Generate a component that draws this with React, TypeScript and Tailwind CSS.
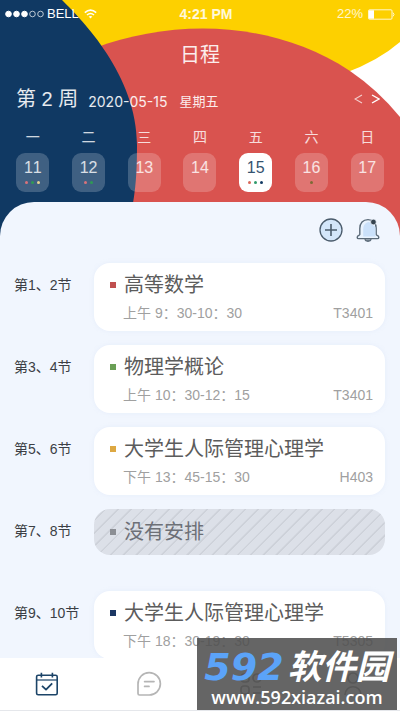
import React from 'react';
import clsx from 'clsx';

interface Day {
    label: string;
    date: number;
    dots: string[];
}

interface Lesson {
    period: string;
    title: string;
    marker: string;
    time?: string;
    room?: string;
}

const days: Day[] = [
    { label: '一', date: 11, dots: ['bg-[#d9727a]', 'bg-[#2f9a55]', 'bg-[#e6d290]'] },
    { label: '二', date: 12, dots: ['bg-[#d9727a]', 'bg-[#2f9a55]'] },
    { label: '三', date: 13, dots: [] },
    { label: '四', date: 14, dots: [] },
    { label: '五', date: 15, dots: ['bg-[#d9685a]', 'bg-[#2f9a6a]', 'bg-[#123a63]'] },
    { label: '六', date: 16, dots: ['bg-[#7d6a35]'] },
    { label: '日', date: 17, dots: [] },
];

const lessons: Lesson[] = [
    { period: '第1、2节', title: '高等数学', marker: 'bg-[#c0504f]', time: '上午 9：30-10：30', room: 'T3401' },
    { period: '第3、4节', title: '物理学概论', marker: 'bg-[#6a9f55]', time: '上午 10：30-12：15', room: 'T3401' },
    { period: '第5、6节', title: '大学生人际管理心理学', marker: 'bg-[#dda842]', time: '下午 13：45-15：30', room: 'H403' },
    { period: '第7、8节', title: '没有安排', marker: 'bg-[#8b8e94]' },
    { period: '第9、10节', title: '大学生人际管理心理学', marker: 'bg-[#1c3763]', time: '下午 18：30-19：30', room: 'T5305' },
];

const HeaderShapes = () => (
    <svg className="absolute top-0 left-0 w-full h-[250px]" viewBox="0 0 400 250" preserveAspectRatio="none" aria-hidden="true">
        <rect width="400" height="250" fill="#fff" />
        <path d="M50 0H400V42Q378 61 345 73L90 60Z" fill="#fdd000" />
        <path d="M95 48C170 20 270 18 350 71Q378 90 400 117V250H95Z" fill="#d9534f" />
        <path d="M0 0H62C82 20 137 75 137 145C137 170 136 190 131 214V250H0Z" fill="#103963" />
    </svg>
);

const StatusBar = () => (
    <div className="relative grid grid-cols-[100px_1fr_88px] items-center h-7 px-[5px] text-[13px] text-white">
        <div className="flex items-center">
            <svg width="40" height="8" viewBox="0 0 40 8" fill="#fff" stroke="#fff">
                <circle cx="3.5" cy="4" r="2.8" />
                <circle cx="11.5" cy="4" r="2.8" />
                <circle cx="19.5" cy="4" r="2.8" />
                <circle cx="27.5" cy="4" r="2.8" fill="none" strokeWidth="0.7" />
                <circle cx="35.5" cy="4" r="2.8" fill="none" strokeWidth="0.7" />
            </svg>
            <span className="ml-[2px]">BELL</span>
            <svg className="ml-[5px]" width="13" height="10" viewBox="0 0 13 10" fill="none" stroke="#fff" strokeWidth="1.6">
                <path d="M0.8 3.6Q6.5 -1.4 12.2 3.6" />
                <path d="M3 6Q6.5 3 10 6" />
                <path d="M6.5 9.4L4.7 7.6Q6.5 6.3 8.3 7.6Z" fill="#fff" stroke="none" />
            </svg>
        </div>
        <span className="text-center font-bold text-sm text-white/85">4:21 PM</span>
        <div className="flex items-center justify-end gap-[5px] text-white/80">
            <span>22%</span>
            <svg width="27" height="11" viewBox="0 0 27 11" fill="none" stroke="#fff" strokeWidth="0.8">
                <rect x="0.5" y="0.8" width="23.5" height="9.4" rx="1" />
                <rect x="1" y="1.3" width="5" height="8.4" fill="#fff" stroke="none" />
                <path d="M25 3.6Q27 5.5 25 7.4" />
            </svg>
        </div>
    </div>
);

const WeekHeader = () => (
    <div className="relative flex items-center mt-4 h-7 px-4 pr-5 text-white/90">
        <span className="text-xl">第 2 周</span>
        <span className="ml-[10px] pt-[6px] font-['Inter','Noto_Sans_CJK_SC',sans-serif] text-sm">2020-05-15</span>
        <span className="ml-3 pt-[6px] text-[13px]">星期五</span>
        <div className="ml-auto flex gap-2">
            <button aria-label="上一周" className="opacity-70">
                <svg width="9" height="10" viewBox="0 0 9 10" fill="none" stroke="#fff" strokeWidth="1.2"><path d="M8 1L1 5L8 9" /></svg>
            </button>
            <button aria-label="下一周">
                <svg width="9" height="10" viewBox="0 0 9 10" fill="none" stroke="#fff" strokeWidth="1.4"><path d="M1 1L8 5L1 9" /></svg>
            </button>
        </div>
    </div>
);

const DayPicker = () => (
    <div className="relative grid grid-cols-7 mt-[14px] px-[5px]">
        {days.map((d) => (
            <div key={d.date} className="flex flex-col items-center">
                <span className="h-5 leading-5 text-sm text-white/80">{d.label}</span>
                <button
                    className={clsx(
                        'mt-[6px] w-[33px] h-[39px] rounded-[9px] flex flex-col items-center pt-[5px]',
                        d.date === 15 ? 'bg-white text-[#35536f]' : 'bg-white/20 text-white/80',
                    )}
                >
                    <span className="h-5 leading-5 text-base [font-kerning:none]">{d.date}</span>
                    <span className="flex gap-[3px] mt-[3px]">
                        {d.dots.map((c) => <i key={c} className={clsx('w-[3px] h-[3px] rounded-full', c)} />)}
                    </span>
                </button>
            </div>
        ))}
    </div>
);

const Toolbar = () => (
    <div className="flex justify-end gap-[13px] h-6 pr-5">
        <button aria-label="添加">
            <svg width="24" height="24" viewBox="0 0 24 24" fill="none" stroke="#4b5c6c" strokeWidth="1.3">
                <circle cx="12" cy="12" r="11" fill="#d3e6fa" />
                <path d="M12 6V18M6 12H18" strokeWidth="1.6" />
            </svg>
        </button>
        <button aria-label="提醒">
            <svg width="24" height="24" viewBox="0 0 24 24" fill="none" stroke="#5b6a78" strokeWidth="1.4" strokeLinejoin="round">
                <path d="M12 1.6C7 1.6 3.8 5 3.8 10.5V16.6C3.8 17.6 1.2 17.4 1.2 19.4Q1.2 20.6 2.6 20.6H21.4Q22.8 20.6 22.8 19.4C22.8 17.4 20.2 17.6 20.2 16.6V10.5C20.2 5 17 1.6 12 1.6Z" fill="#e9f3fe" />
                <path d="M13 4C9.4 4.6 7.2 7 7.2 11.2V18.6H19.4V9Z" fill="#cbe1fa" stroke="none" />
                <path d="M8.8 21.2Q9.5 23.2 12 23.2T15.2 21.2" fill="#7f8d9a" />
                <circle cx="17.4" cy="4" r="2.8" fill="#35434f" stroke="#f2f7ff" strokeWidth="0.6" />
            </svg>
        </button>
    </div>
);

const LessonCard = ({ lesson }: { lesson: Lesson }) => {
    const empty = !lesson.time;
    return (
        <div
            className={clsx(
                'flex-1 rounded-[16px] pl-4 pr-3',
                empty
                    ? 'py-[9px] bg-[repeating-linear-gradient(135deg,#dce0e8_0px,#dce0e8_7px,#cdd1d9_8px,#cdd1d9_9px)]'
                    : 'py-2 bg-white shadow-[0_0_4px_rgba(200,215,240,0.25)]',
            )}
        >
            <div className="flex items-center h-7">
                <i className={clsx('w-[6px] h-[6px]', lesson.marker)} />
                <h2 className={clsx('ml-2 text-xl leading-7', empty ? 'text-[#6d7077]' : 'text-[#5c5c5c]')}>{lesson.title}</h2>
            </div>
            {!empty && (
                <div className="flex justify-between mt-1 pl-[13px] h-5 text-sm leading-5 text-[#a0a0a0]">
                    <span>{lesson.time}</span>
                    <span>{lesson.room}</span>
                </div>
            )}
        </div>
    );
};

const TabBar = () => (
    <nav className="relative shrink-0 h-[53px] bg-white border-b border-gray-200">
        <div className="grid grid-cols-4 -mx-1 h-full">
            <button aria-label="日程" className="flex items-center justify-center">
                <svg width="24" height="24" viewBox="0 0 24 24" fill="none" stroke="#1c4468" strokeWidth="1.6" strokeLinejoin="round">
                    <rect x="1.6" y="3.2" width="20.6" height="19.6" rx="1.6" />
                    <path d="M1.6 8H22.2" strokeWidth="1.2" />
                    <path d="M6.4 0.8V5.4M17.4 0.8V5.4" />
                    <path d="M7 13.8L11 17.6L17.2 11.4" strokeWidth="1.8" />
                </svg>
            </button>
            <button aria-label="消息" className="flex items-center justify-center">
                <svg width="26" height="26" viewBox="0 0 26 26" fill="none" stroke="#b5b5b5" strokeWidth="1.7" strokeLinecap="round">
                    <path d="M2 22.5V13A11.2 11.2 0 1 1 13 24H3.5Q2 24 2 22.5Z" />
                    <path d="M8.6 10.6H18M8.6 15.4H13" />
                </svg>
            </button>
            <button aria-label="应用" className="flex items-center justify-center">
                <svg width="24" height="24" viewBox="0 0 24 24" fill="none" stroke="#8a8a8a" strokeWidth="1.7">
                    <rect x="2" y="2" width="8" height="8" rx="3" />
                    <rect x="14" y="2" width="8" height="8" rx="4" />
                    <rect x="2" y="14" width="8" height="8" rx="3" />
                    <path d="M14 15H22M14 21H22" />
                </svg>
            </button>
            <button aria-label="我的" className="flex items-center justify-center">
                <svg width="24" height="26" viewBox="0 0 24 26" fill="none" stroke="#8a8a8a" strokeWidth="1.7">
                    <circle cx="12" cy="7" r="5" />
                    <path d="M4 24C4 13 20 13 20 24" />
                </svg>
            </button>
        </div>
    </nav>
);

const SiteBadge = () => (
    <div className="absolute right-[3px] bottom-px w-[200px] h-[72px] pt-[11px] bg-[#505050]/88 text-white overflow-hidden">
        <div className="flex items-center justify-center h-[36px] font-bold italic whitespace-nowrap">
            <span className="font-['DejaVu_Sans',sans-serif] text-[38px] leading-none text-[#5ba3f8]">592</span>
            <span className="ml-1 text-[34px] leading-none">软件园</span>
        </div>
        <div className="h-6 leading-6 text-center font-['Open_Sans',sans-serif] text-lg font-semibold">www.592xiazai.com</div>
    </div>
);

export default function App() {
    return (
        <div className="relative flex flex-col h-screen overflow-hidden bg-white font-['Liberation_Sans','Noto_Sans_CJK_SC',sans-serif]">
            <HeaderShapes />
            <header className="shrink-0 pb-[10px]">
                <StatusBar />
                <h1 className="relative mt-[13px] h-7 leading-7 text-center text-xl text-white/90">日程</h1>
                <WeekHeader />
                <DayPicker />
            </header>
            <main className="relative flex-1 min-h-0 overflow-hidden rounded-t-[34px] bg-[#f1f6fe] pt-4">
                <Toolbar />
                <ul className="mt-[21px] pr-[15px] flex flex-col gap-[14px]">
                    {lessons.map((lesson, i) => (
                        <li key={lesson.period} className={clsx('flex items-start', i === 4 && 'mt-[22px]')}>
                            <span className="w-[94px] shrink-0 pl-[14px] pt-2 text-sm leading-7 text-[#3c3f45]">{lesson.period}</span>
                            <LessonCard lesson={lesson} />
                        </li>
                    ))}
                </ul>
            </main>
            <TabBar />
            <SiteBadge />
        </div>
    );
}
